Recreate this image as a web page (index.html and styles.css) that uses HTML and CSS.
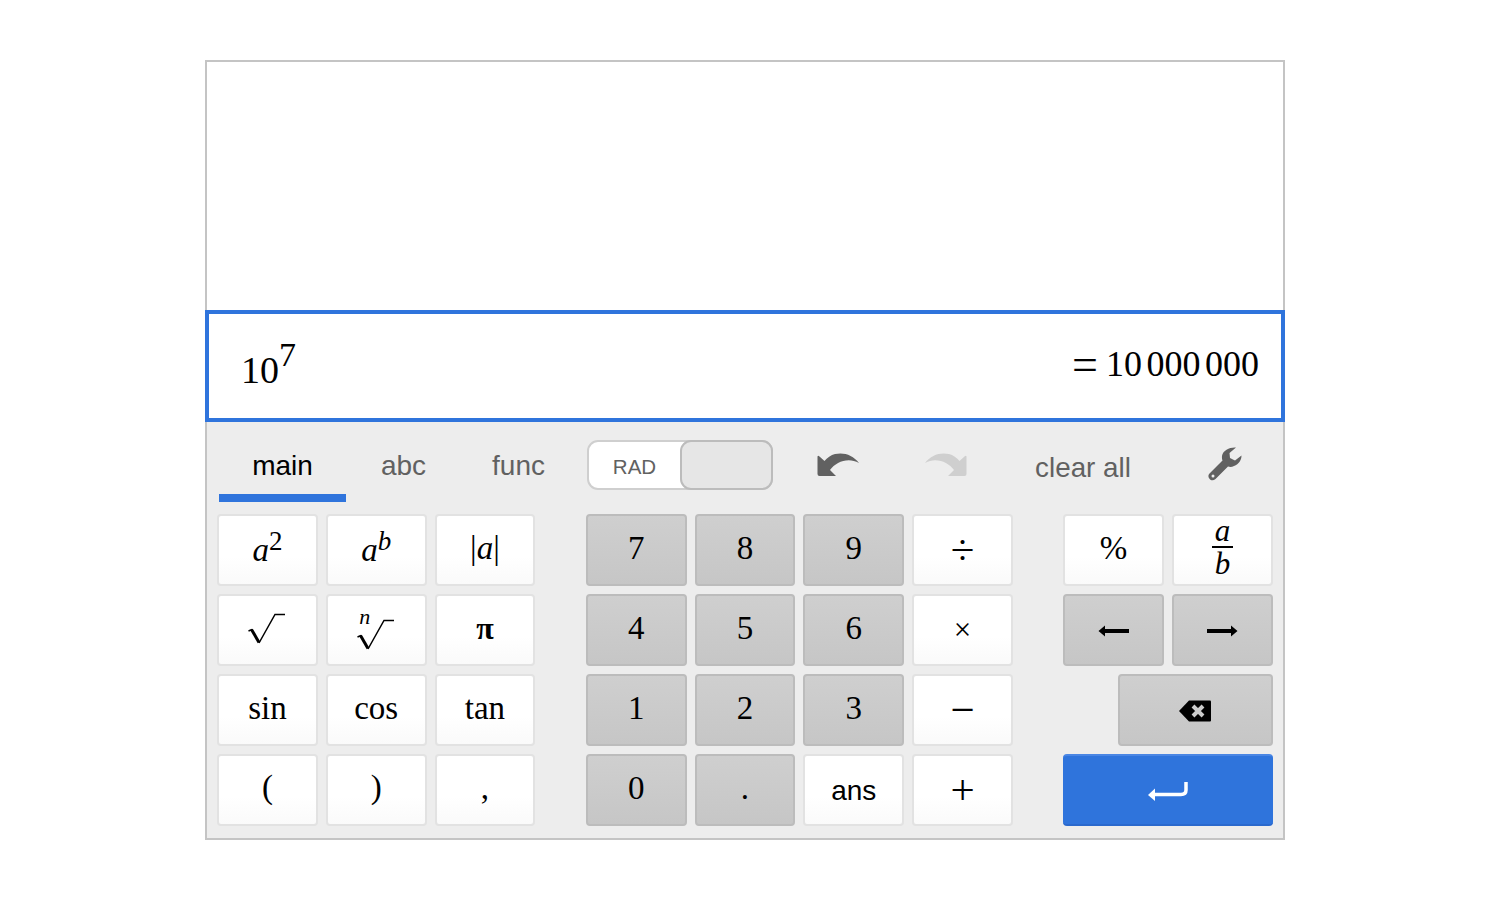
FILE: index.html
```html
<!DOCTYPE html>
<html lang="en">
<head>
<meta charset="utf-8">
<title>Calculator</title>
<link rel="stylesheet" href="styles.css">
</head>
<body>
<div class="calc">
  <div class="history"></div>
  <div class="input">
    <div class="expr">10<span class="expr-sup">7</span></div>
    <div class="result"><span class="eq">=</span>10<span class="thin"></span>000<span class="thin"></span>000</div>
  </div>
  <div class="pad">
    <div class="toolbar">
      <div class="tab tab-main active">main</div>
      <div class="tab">abc</div>
      <div class="tab">func</div>
      <div class="toggle"><span class="toggle-label">RAD</span><span class="knob"></span></div>
      <div class="tool">
        <svg width="42" height="24" viewBox="0 0 42 24"><path class="ic-dark" d="M0.500 4 L0.500 21 Q0.500 23 2.500 23 L19 23 L13 17 C19 9 31 4 42 10 C36 2 27 -1 18 1 C14 2 10 5 7.500 8 L2.500 3.500 Q0.500 2 0.500 4 Z"/></svg>
      </div>
      <div class="tool">
        <svg width="42" height="24" viewBox="0 0 42 24"><path class="ic-light" d="M41.500 4 L41.500 21 Q41.500 23 39.500 23 L23 23 L29 17 C23 9 11 4 0 10 C6 2 15 -1 24 1 C28 2 32 5 34.500 8 L39.500 3.500 Q41.500 2 41.500 4 Z"/></svg>
      </div>
      <div class="tool tool-clear">clear all</div>
      <div class="tool tool-wrench">
        <svg width="34" height="34" viewBox="0 0 34 34"><path class="ic-dark" d="M28 0.500 C22 0 15 3 14 9 C13.800 11 14 12 14.500 13.500 L1.500 26.500 C0 28 0 30 1.500 31.800 C3 33.800 5.500 33.800 7.500 32 L20 19.500 C22 20.200 24 20 26 19 C31 17 33.500 13 33.500 8.500 L27 13.500 L22 11 L21.500 6 Z"/><circle class="ic-hole" cx="5" cy="29" r="1.500"/></svg>
      </div>
    </div>
    <div class="keys">
      <div class="group group-left">
        <div class="key"><span class="m pow"><i>a</i><sup class="s">2</sup></span></div>
        <div class="key"><span class="m pow"><i>a</i><sup class="s"><i>b</i></sup></span></div>
        <div class="key"><span class="m">|<i>a</i>|</span></div>
        <div class="key"><svg width="38" height="34" viewBox="0 0 38 34"><path class="rad-thin" d="M0.500 18 L4 16.500 M11 30 L27 1.500 L37 1.500"/><path class="rad-bold" d="M3.500 16.500 L11 29.500"/></svg></div>
        <div class="key"><span class="root"><i class="root-n">n</i><svg width="38" height="34" viewBox="0 0 38 34"><path class="rad-thin" d="M0.500 18 L4 16.500 M11 30 L27 1.500 L37 1.500"/><path class="rad-bold" d="M3.500 16.500 L11 29.500"/></svg></span></div>
        <div class="key"><span class="m pi">π</span></div>
        <div class="key"><span class="m">sin</span></div>
        <div class="key"><span class="m">cos</span></div>
        <div class="key"><span class="m">tan</span></div>
        <div class="key"><span class="m paren">(</span></div>
        <div class="key"><span class="m paren">)</span></div>
        <div class="key"><span class="m">,</span></div>
      </div>
      <div class="group group-mid">
        <div class="key dark"><span class="m">7</span></div>
        <div class="key dark"><span class="m">8</span></div>
        <div class="key dark"><span class="m">9</span></div>
        <div class="key"><span class="m op">÷</span></div>
        <div class="key dark"><span class="m">4</span></div>
        <div class="key dark"><span class="m">5</span></div>
        <div class="key dark"><span class="m">6</span></div>
        <div class="key"><span class="m op-small">×</span></div>
        <div class="key dark"><span class="m">1</span></div>
        <div class="key dark"><span class="m">2</span></div>
        <div class="key dark"><span class="m">3</span></div>
        <div class="key"><span class="m op">−</span></div>
        <div class="key dark"><span class="m">0</span></div>
        <div class="key dark"><span class="m">.</span></div>
        <div class="key"><span class="ans">ans</span></div>
        <div class="key"><span class="m op">+</span></div>
      </div>
      <div class="group group-right">
        <div class="key"><span class="m">%</span></div>
        <div class="key"><span class="frac"><i>a</i><span class="bar"></span><i>b</i></span></div>
        <div class="key dark"><svg class="arrow" width="32" height="12" viewBox="0 0 32 12"><path class="ic-black" d="M0.500 6 L7 0.500 L7 4 L31 4 L31 8 L7 8 L7 11.500 Z"/></svg></div>
        <div class="key dark"><svg class="arrow-r" width="32" height="12" viewBox="0 0 32 12"><path class="ic-black" d="M31.500 6 L25 0.500 L25 4 L1 4 L1 8 L25 8 L25 11.500 Z"/></svg></div>
        <div class="key dark key-back"><svg width="32" height="22" viewBox="0 0 32 22"><path class="ic-black" d="M0 11 L10 0.500 L31 0.500 Q32 0.500 32 1.500 L32 20.500 Q32 21.500 31 21.500 L10 21.500 Z"/><path class="ic-x" d="M14 6 L24 16 M24 6 L14 16"/></svg></div>
        <div class="key key-enter"><svg width="40" height="22" viewBox="0 0 40 22"><path class="ic-white" d="M6 13.500 L33 13.500 Q38 13.500 38 9 L38 1"/><path class="ic-white-fill" d="M0 14 L7 7.500 L7 20 Z"/></svg></div>
      </div>
    </div>
  </div>
</div>
</body>
</html>
```
FILE: styles.css
```css
* { box-sizing: border-box; }
html, body { margin: 0; padding: 0; background: #fff; }
body { padding: 60px 205px; font-family: "Liberation Sans", Arial, sans-serif; }

.calc {
  width: 1080px;
  height: 780px;
  border: 2px solid #c4c4c4;
  display: flex;
  flex-direction: column;
  background: #ededed;
}
.history { height: 248px; background: #fff; }

.input {
  height: 112px;
  margin: 0 -2px;
  border: 4px solid #2f74dc;
  background: #fff;
  display: flex;
  justify-content: space-between;
  align-items: flex-start;
  padding: 0 22px 0 32px;
  font-family: "Liberation Serif", "Times New Roman", serif;
  color: #000;
}
.expr { font-size: 38px; line-height: 44px; margin-top: 34px; white-space: nowrap; }
.expr-sup { font-size: 34px; line-height: 0; vertical-align: 17px; }
.result { font-size: 36px; line-height: 42px; margin-top: 26px; white-space: nowrap; display: flex; align-items: baseline; }
.eq { font-size: 46px; width: 34px; line-height: 42px; transform: translateY(4px); }
.thin { width: 4.500px; }

.pad { flex: 1; padding: 0 10px 0 12px; display: flex; flex-direction: column; }

.toolbar { height: 92px; display: flex; align-items: flex-start; color: #616161; font-size: 28px; }
.tab {
  width: 115px;
  height: 80px;
  display: flex;
  align-items: flex-start;
  justify-content: center;
  padding-top: 28px;
  line-height: 32px;
  font-size: 28px;
  flex-shrink: 0;
}
.tab-main { width: 127px; }
.tab.active { color: #000; border-bottom: 8px solid #2f74dc; }

.toggle {
  width: 186px;
  height: 50px;
  margin: 18px 11px 0 11px;
  border: 2px solid #cfcfcf;
  border-radius: 11px;
  background: #fff;
  display: flex;
  align-items: center;
  justify-content: space-between;
  flex-shrink: 0;
}
.toggle-label { width: 91px; text-align: center; font-size: 20.500px; color: #616161; margin-top: 4px; }
.knob {
  width: 93px;
  height: 50px;
  margin: -2px;
  border: 2px solid #bcbcbc;
  border-radius: 11px;
  background: #e6e6e6;
}

.tool { width: 108px; height: 92px; display: flex; justify-content: center; padding-top: 31px; flex-shrink: 0; }
.tool svg { display: block; }
.tool-clear { width: 166px; line-height: 32px; padding-top: 30px; white-space: nowrap; font-size: 27.800px; }
.tool-wrench { width: 118px; padding-top: 25px; }
.ic-dark { fill: #616161; }
.ic-light { fill: #cfcfcf; }
.ic-hole { fill: #ededed; }
.ic-black { fill: #000; }
.ic-x { stroke: #cbcbcb; stroke-width: 4; fill: none; }
.ic-white { stroke: #fff; stroke-width: 3.500; fill: none; }
.ic-white-fill { fill: #fff; }
.rad-thin { fill: none; stroke: #000; stroke-width: 1.500; }
.rad-bold { fill: none; stroke: #000; stroke-width: 3; }

.keys { display: flex; }
.group { display: grid; gap: 8px; grid-auto-rows: 72px; flex-shrink: 0; }
.group-left { width: 318.300px; grid-template-columns: repeat(3, 1fr); margin-left: -2px; }
.group-mid { width: 427.200px; grid-template-columns: repeat(4, 1fr); margin-left: 50.500px; }
.group-right { width: 210px; grid-template-columns: repeat(2, 1fr); margin-left: 50px; }

.key {
  display: flex;
  align-items: center;
  justify-content: center;
  border: 2px solid #e2e2e2;
  border-radius: 4px;
  background: linear-gradient(#fff 60%, #fafafa);
  color: #000;
}
.key.dark {
  border-color: #bcbcbc;
  background: linear-gradient(#cfcfcf, #c6c6c6);
}
.key-back { grid-column: 1 / 3; margin-left: 55px; }
.key-enter {
  grid-column: 1 / 3;
  border: 0;
  border-top: 2px solid #4a86e4;
  border-bottom: 2px solid #2a69cd;
  background: #2f74dc;
}
.key-back svg { margin: 2px 0 0 0; }
.key-enter svg { margin: 4px 0 0 0; }
.arrow { margin: 2px 0 0 2px; }
.arrow-r { margin: 2px 0 0 0; }

.m {
  font-family: "Liberation Serif", "Times New Roman", serif;
  font-size: 33px;
  line-height: 40px;
  padding-bottom: 4px;
  white-space: nowrap;
}
.s { font-size: 27px; line-height: 0; vertical-align: 11px; }
.pow { padding-bottom: 0; }
.paren { padding-bottom: 6px; }
.pi { font-weight: bold; font-size: 32px; }
.op { font-size: 43px; padding-bottom: 0; }
.op-small { font-size: 31px; padding-bottom: 0; }
.ans { font-size: 28px; line-height: 32px; margin-top: 2px; }
.root { display: block; position: relative; margin-top: 12px; height: 34px; }
.root svg { display: block; }
.root-n {
  position: absolute;
  left: 2px;
  top: -12px;
  font-family: "Liberation Serif", serif;
  font-size: 22px;
  line-height: 20px;
}
.frac {
  display: flex;
  flex-direction: column;
  align-items: center;
  font-family: "Liberation Serif", serif;
  font-size: 31px;
  line-height: 30px;
  padding-bottom: 5px;
}
.bar { width: 21px; height: 2px; background: #000; margin: 0 0 1px; }
```
